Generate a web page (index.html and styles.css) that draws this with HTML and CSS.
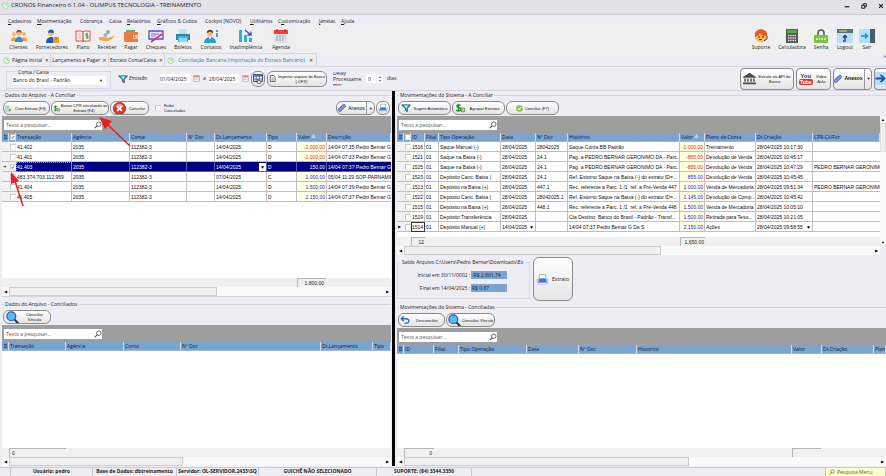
FILE: index.html
```html
<!DOCTYPE html>
<html lang="pt-BR">
<head>
<meta charset="utf-8">
<title>CRONOS Financeiro 6.1.04</title>
<link rel="stylesheet" href="styles.css">
</head>
<body>
<svg class="sprite" aria-hidden="true">
  <symbol id="logo" viewBox="0 0 12 12"><circle cx="6" cy="6" r="5" fill="#eef9ee" stroke="#7fd08a" stroke-width="1.2"/><path d="M4 8l4-4M5 4h3v3" fill="none" stroke="#7fd08a"/></symbol>
  <symbol id="people" viewBox="0 0 16 14"><circle cx="3" cy="5" r="2" fill="#f6b26b"/><circle cx="13" cy="5" r="2" fill="#f6b26b"/><path d="M0 12c0-5 6-5 6 0zM10 12c0-5 6-5 6 0z" fill="#f39c2d"/><circle cx="8" cy="4" r="2.6" fill="#f6b26b"/><path d="M5.300 4c0-4 5.400-4 5.400 0L8 2.500z" fill="#7a3d1c"/><path d="M4 13c0-7 8-7 8 0z" fill="#2b8fd0"/></symbol>
  <symbol id="worker" viewBox="0 0 16 14"><circle cx="7" cy="4.500" r="2.700" fill="#f6b26b"/><path d="M4 3.800C4-.6 10-.6 10 3.800z" fill="#1d5fa8"/><path d="M2 14c0-8 10-8 10 0z" fill="#1f5a9c"/><path d="M9 8h6v6H9z" fill="#f0a030"/><path d="M11.500 8h1v3h-1z" fill="#a65e10"/></symbol>
  <symbol id="book" viewBox="0 0 16 14"><path d="M1 2h6l1 1 1-1h6v10H1z" fill="#f4efe8" stroke="#d4574e"/><path d="M8 3v10" stroke="#c0392b"/><path d="M3 5h3M3 7h3M3 9h3" stroke="#bbb"/><path d="M13 4.800h-2v2h2v2h-2M12 4v6" fill="none" stroke="#349a4a" stroke-width=".9"/></symbol>
  <symbol id="receive" viewBox="0 0 16 14"><circle cx="9" cy="3" r="2" fill="#8ba7b8"/><circle cx="6.500" cy="6" r="2" fill="#9ab3c2"/><path d="M0 8h5l4 1 6-2c1 1-3 4-6 5H5l-5-1z" fill="#f5a93b"/></symbol>
  <symbol id="wallet" viewBox="0 0 16 14"><path d="M3 1h9v5H3z" fill="#4cbb6c"/><path d="M1 3h14v10H2L1 12z" fill="#ee7b45"/><path d="M10 6h5v4h-5z" fill="#ffc98a"/><circle cx="11.500" cy="8" r=".8" fill="#b04a1d"/></symbol>
  <symbol id="cheque" viewBox="0 0 16 14"><path d="M1 2h14v8H1z" fill="#e9e7fb" stroke="#5656b5" stroke-width="1.300"/><path d="M3 5h8M3 7h5" stroke="#7777c9"/><path d="M3 13L14 5" stroke="#cf3475" stroke-width="1.700"/></symbol>
  <symbol id="printer" viewBox="0 0 16 14"><path d="M4 0h8v5H4z" fill="#b9e6f6"/><path d="M1 5h14v6H1z" fill="#3b7f99"/><path d="M3 7h10v6H3z" fill="#3bb9e6"/><path d="M4 9h8v4H4z" fill="#83def8"/></symbol>
  <symbol id="contact" viewBox="0 0 16 14"><circle cx="7" cy="4.500" r="3" fill="#f8b878"/><path d="M4 4C3-.5 11-.5 10 4L7 2.500z" fill="#5d3824"/><path d="M1 14C1 6 13 6 13 14z" fill="#2b9bd8"/><path d="M6 8h2l-1 3z" fill="#fff"/><path d="M14 1v2M14 4v4" stroke="#2b7fc8" stroke-width="1.500"/></symbol>
  <symbol id="bars" viewBox="0 0 16 14"><path d="M1 1h3v12H1zM6 6h3v7H6zM11 9h3v4h-3z" fill="#22b6d4"/><path d="M7 1l6 5M13 2.500V6H9.500" fill="none" stroke="#3d47b0" stroke-width="1.300"/></symbol>
  <symbol id="calendar" viewBox="0 0 16 14"><path d="M1 3h14v11H1z" fill="#e3e6ea"/><path d="M1 1h14v4H1z" fill="#ef3e36"/><path d="M3 7h10M3 9h10M3 11h8" stroke="#8d98a3" stroke-dasharray="2 1"/><path d="M4 0v3M12 0v3" stroke="#9c2b25"/></symbol>
  <symbol id="support" viewBox="0 0 16 14"><circle cx="8" cy="7.500" r="6" fill="#ffb64c"/><path d="M2 8C0-2 16-2 14 7c-4 0-6-1-7-3-1 2-3 3-5 4z" fill="#f2541f"/><circle cx="6" cy="8" r=".7"/><circle cx="10" cy="8" r=".7"/><path d="M6 10.500h3M14 7v3l-3 2" fill="none" stroke="#444"/></symbol>
  <symbol id="calc" viewBox="0 0 16 14"><path d="M2 0h12v14H2z" fill="#555"/><path d="M3 1h10v3H3z" fill="#5fa84a"/><path d="M4 6.500h8M4 9h8M4 11.500h8" stroke="#ddd" stroke-width="1.400" stroke-dasharray="1.500 .7"/></symbol>
  <symbol id="lock" viewBox="0 0 16 14"><path d="M5 7V4c0-4 6-4 6 0v3" fill="none" stroke="#555" stroke-width="1.500"/><rect x="1" y="6" width="14" height="8" rx="1" fill="#7fc241"/><path d="M3 10h10" stroke="#fff" stroke-width="1.500" stroke-dasharray="1.500 1.200"/></symbol>
  <symbol id="logout" viewBox="0 0 16 14"><path d="M0 0h16v14H0z" fill="#b9defc"/><path d="M0 0h16v4H0z" fill="#52707c"/><path d="M2 2h8" stroke="#d7e67c"/><path d="M6 12h2V7M6 8.500l2-2 2 2" fill="none" stroke="#2b35b5" stroke-width="1.500"/></symbol>
  <symbol id="exit" viewBox="0 0 16 14"><path d="M0 0h11v14H0z" fill="#b3e2fc"/><path d="M11 0h5v14h-5z" fill="#455f6c"/><path d="M2 7h6M6 4.500L8.500 7 6 9.500" fill="none" stroke="#168ce0" stroke-width="1.500"/></symbol>
  <symbol id="funnel" viewBox="0 0 16 14"><path d="M1 2h14L10 8v5l-3-2V8z" fill="#23c5dd" stroke="#343b3e" stroke-width="1.300"/><path d="M5 3h6L8.500 7z" fill="#c7f7fb"/></symbol>
  <symbol id="cal2" viewBox="0 0 10 10"><path d="M1 1h8v8H1z" fill="#fff" stroke="#91a9c5"/><path d="M1 1h8v2.500H1z" fill="#ef8265"/><path d="M2 6h6" stroke="#91a9c5"/></symbol>
  <symbol id="gridhand" viewBox="0 0 16 16"><path d="M1 1h14v11H1z" fill="#fff" stroke="#26306a" stroke-width="1.500"/><path d="M1 2h14v2H1z" fill="#3946a5"/><path d="M5 3v9M10 3v9M1 8h14" stroke="#26306a"/><path d="M7 15V8l2 3h4l-1 4z" fill="#fff" stroke="#222"/></symbol>
  <symbol id="filedoc" viewBox="0 0 14 16"><path d="M2 1h7l4 4v10H2z" fill="#fff" stroke="#333" stroke-width="1.600"/><path d="M5 7h5M5 9.500h5M5 12h5" stroke="#333"/></symbol>
  <symbol id="bank" viewBox="0 0 16 14"><path d="M0 5l8-5 8 5v1H0z" fill="#4d4d4d"/><path d="M2.500 7v4M6 7v4M10 7v4M13.500 7v4" stroke="#4d4d4d" stroke-width="1.800"/><path d="M0 12h16v2H0z" fill="#4d4d4d"/></symbol>
  <symbol id="clip" viewBox="0 0 16 14"><path d="M2 9l7-7c3-2 6 0 4 3l-7 7c-3 2-5-1-3-3l6-6" fill="#8995dc" stroke="#5b68c4" stroke-width="1.600"/></symbol>
  <symbol id="create" viewBox="0 0 16 14"><path d="M1 1h8v12H1z" fill="#dce9f8" stroke="#7292bd"/><path d="M3 4h4M3 6.500h4M3 9h3" stroke="#7292bd"/><path d="M8 8l3-4 4 4-4 5z" fill="#f2ce4b"/><circle cx="11" cy="11" r="2.500" fill="#4dad51"/></symbol>
  <symbol id="money" viewBox="0 0 16 14"><path d="M9 3C5 0 1 3 4 5.500l4 1.500c4 2-1 7-6 3.500M5.500 0v13" fill="none" stroke="#16962c" stroke-width="2.200"/><path d="M10 7h5v6h-5z" fill="#efe3b5" stroke="#167026"/><path d="M12.500 8v4" stroke="#b82"/></symbol>
  <symbol id="cancel" viewBox="0 0 16 16"><circle cx="8" cy="8" r="7.500" fill="#d8382f" stroke="#942820"/><path d="M3 6c2-5 8-5 10 0z" fill="#ee938c"/><path d="M5 5l6 6M11 5l-6 6" stroke="#fff" stroke-width="2.200"/></symbol>
  <symbol id="print2" viewBox="0 0 16 14"><path d="M4 1h8v5H4z" fill="#fff" stroke="#8fa4c9"/><path d="M1 6h14v6H1z" fill="#b5c0d2"/><path d="M4 6h8l1 5H3z" fill="#3477e0"/><path d="M3 11h10v2H3z" fill="#fff" stroke="#8fa4c9" stroke-width=".6"/></symbol>
  <symbol id="check" viewBox="0 0 16 16"><circle cx="8" cy="8" r="7" fill="#8dc63f" stroke="#5e9220"/><path d="M4 8l3 3 5-6" fill="none" stroke="#fff" stroke-width="2.400"/></symbol>
  <symbol id="undo" viewBox="0 0 16 14"><path d="M2 5h8c6 0 5 7 0 7H7M6 1L2 5l4 4" fill="none" stroke="#2c6bb5" stroke-width="2.200"/></symbol>
  <symbol id="lens" viewBox="0 0 16 16"><path d="M10 10l5 5" stroke="#23364a" stroke-width="2.600"/><circle cx="6.500" cy="6.500" r="5.500" fill="#5fb6f5" stroke="#2c5f9c" stroke-width="1.500"/></symbol>
  <symbol id="find" viewBox="0 0 10 10"><circle cx="6" cy="4" r="2.800" fill="#fff" stroke="#555" stroke-width="1.100"/><path d="M4 6L1 9" stroke="#555" stroke-width="1.500"/></symbol>
  <symbol id="go" viewBox="0 0 16 16"><path d="M0 0h16v16H0z" fill="#b3dffc"/><path d="M2 8h11M8 3.500L13 8l-5 4.500" fill="none" stroke="#1c4db8" stroke-width="2.200"/></symbol>
  <symbol id="rows" viewBox="0 0 6 6"><path d="M1 1h4M1 3h4M1 5h4" stroke="#123c6c"/></symbol>
  <symbol id="sort" viewBox="0 0 6 6"><path d="M3 1l2 4H1z" fill="#a9c5e4" stroke="#d8e6f5" stroke-width=".7"/></symbol>
</svg>

<header class="titlebar"><svg class="ic-s"><use href="#logo"/></svg><h1>CRONOS Financeiro 6.1.04 - OLIMPUS TECNOLOGIA - TREINAMENTO</h1>
  <div class="winbtns"><button aria-label="Minimizar"><svg viewBox="0 0 8 8"><path d="M1 5h6" stroke="#111" stroke-width="1.600"/></svg></button><button aria-label="Restaurar"><svg viewBox="0 0 8 8"><path d="M3 3V1h4v4H5M1 3h4v4H1z" fill="none" stroke="#111" stroke-width="1.200"/></svg></button><button aria-label="Fechar"><svg viewBox="0 0 8 8"><path d="M1.500 1.500l5 5M6.500 1.500l-5 5" stroke="#111" stroke-width="1.400"/></svg></button></div>
</header>
<nav class="menubar"><a href="#"><u>C</u>adastros</a><a href="#"><u>M</u>ovimentação</a><a href="#">Cobrança</a><a href="#">Caixa</a><a href="#"><u>R</u>elatórios</a><a href="#"><u>G</u>ráficos &amp; Cubos</a><a href="#">Cockpit (NOVO)</a><a href="#"><u>U</u>tilitários</a><a href="#">C<u>u</u>stomização</a><a href="#"><u>J</u>anelas</a><a href="#"><u>A</u>juda</a></nav>
<div class="toolbar">
  <div class="tools tools-main">
    <button><svg><use href="#people"/></svg>Clientes</button><button><svg><use href="#worker"/></svg>Fornecedores</button><button><svg><use href="#book"/></svg>Plano</button><button><svg><use href="#receive"/></svg>Receber</button><button><svg><use href="#wallet"/></svg>Pagar</button><button><svg><use href="#cheque"/></svg>Cheques</button><button><svg><use href="#printer"/></svg>Boletos</button><button><svg><use href="#contact"/></svg>Contatos</button><button><svg><use href="#bars"/></svg>Inadimplência</button><button><svg><use href="#calendar"/></svg>Agenda</button>
  </div>
  <div class="tools tools-side">
    <button><svg><use href="#support"/></svg>Suporte</button><button><svg><use href="#calc"/></svg>Calculadora</button><button><svg><use href="#lock"/></svg>Senha</button><button><svg><use href="#logout"/></svg>Logout</button><button><svg><use href="#exit"/></svg>Sair</button>
  </div>
</div>
<div class="tabs">
  <a class="tab" href="#"><svg class="ic-s"><use href="#logo"/></svg>Página Inicial<span class="x">✕</span></a><a class="tab" href="#">Lançamento a Pagar<span class="x">✕</span></a><a class="tab" href="#">Extrato Conta/Caixa<span class="x">✕</span></a><a class="tab active" href="#"><svg class="ic-s"><use href="#logo"/></svg>Conciliação Bancária (Importação do Extrato Bancário)<span class="x">✕</span></a>
  <span class="more">»</span>
</div>

<section class="filters">
  <fieldset class="account"><legend><label for="conta">Conta / Caixa</label></legend><div class="combo"><select id="conta"><option>Banco do Brasil - Padrão</option></select><i>▼</i></div></fieldset>
  <div class="emission"><svg class="ic-m"><use href="#funnel"/></svg><label for="d1">Emissão</label></div>
  <div class="dates"><input id="d1" type="text" value="01/04/2025"><svg class="ic-s"><use href="#cal2"/></svg><label for="d2">a</label><input id="d2" type="text" value="28/04/2025"><svg class="ic-s"><use href="#cal2"/></svg></div>
  <button class="btn square" aria-label="Grade"><svg class="ic-m"><use href="#gridhand"/></svg></button>
  <button class="btn import"><svg class="ic-s"><use href="#filedoc"/></svg><span>Importar arquivo do Banco<br>(.OFX)</span></button>
  <label class="delay" for="delay"><span>Delay Processame nto:</span></label>
  <div class="days"><input id="delay" type="text" value="0"><span class="spin"><i>▲</i><i>▼</i></span><span>dias</span></div>
  <div class="actions">
    <button class="btn api"><svg class="ic-l"><use href="#bank"/></svg><span>Extrato via API do<br>Banco</span></button>
    <button class="btn video"><span class="yt"><b>You</b><b class="tube">Tube</b></span><span>Vídeo<br>Aula</span></button>
    <button class="btn annex big"><svg class="ic-m"><use href="#clip"/></svg><span>Anexos</span><i class="drop">▼</i></button>
    <button class="btn next" aria-label="Avançar"><svg class="ic-l"><use href="#go"/></svg></button>
  </div>
</section>

<main class="work">
  <div class="side left">
    <section class="panel top">
      <h2><span>Dados do Arquivo - A Conciliar</span></h2>
      <div class="btnrow">
        <button class="btn w47"><svg class="ic-s"><use href="#create"/></svg><span>Criar Extrato (F3)</span></button>
        <button class="btn w58"><svg class="ic-s"><use href="#money"/></svg><span>Baixar CPR vinculando ao<br>Extrato (F4)</span></button>
        <button class="btn w39"><svg class="ic-l"><use href="#cancel"/></svg><span>Cancelar</span></button>
        <label class="show"><input type="checkbox"><span>Exibir<br>Cancelados</span></label>
        <button class="btn annex push"><svg class="ic-m"><use href="#clip"/></svg><span>Anexos</span><i class="drop">▼</i></button>
        <button class="btn square" aria-label="Imprimir"><svg class="ic-m"><use href="#print2"/></svg></button>
      </div>
      <div class="searchbar"><label class="search"><input type="text" placeholder="Texto a pesquisar..." aria-label="Texto a pesquisar"><svg><use href="#find"/></svg></label></div>
      <div class="gridbox">
        <table class="grid">
          <colgroup><col class="c7"><col class="c7"><col class="c56"><col class="c58"><col class="c57"><col class="c28"><col class="c52"><col class="c30"><col class="c30"><col></colgroup>
          <thead><tr><th><svg><use href="#rows"/></svg></th><th><input type="checkbox" checked aria-label="Todos"></th><th>Transação</th><th>Agência</th><th>Conta</th><th>Nº Doc</th><th>Dt.Lançamento</th><th>Tipo</th><th>Valor <svg class="sort"><use href="#sort"/></svg></th><th>Descrição</th></tr></thead>
          <tbody>
            <tr><td></td><td><input type="checkbox" aria-label="41.402"></td><td>41.402</td><td>2035</td><td>112382-3</td><td></td><td>14/04/2025</td><td>D</td><td class="val neg">-2.000,00</td><td>14/04 07:35 Pedro Bernar G</td></tr>
            <tr><td></td><td><input type="checkbox" aria-label="41.401"></td><td>41.401</td><td>2035</td><td>112382-3</td><td></td><td>14/04/2025</td><td>D</td><td class="val neg">-1.000,00</td><td>14/04 07:33 Pedro Bernar G</td></tr>
            <tr class="sel"><td>➔</td><td><input type="checkbox" checked aria-label="41.403"></td><td class="cur">41.403</td><td>2035</td><td>112382-3</td><td></td><td><div class="pick">14/04/2025<i>▼</i></div></td><td>D</td><td class="val">150,00</td><td>14/04 07:37 Pedro Bernar G</td></tr>
            <tr><td></td><td><input type="checkbox" aria-label="483.374"></td><td>483.374.703.112.959</td><td>2035</td><td>112382-3</td><td></td><td>07/04/2025</td><td>C</td><td class="val">1.000,00</td><td>05/04 11:29 SOP-PARNAMIR</td></tr>
            <tr><td></td><td><input type="checkbox" aria-label="41.404"></td><td>41.404</td><td>2035</td><td>112382-3</td><td></td><td>14/04/2025</td><td>D</td><td class="val">1.500,00</td><td>14/04 07:39 Pedro Bernar G</td></tr>
            <tr><td></td><td><input type="checkbox" aria-label="41.405"></td><td>41.405</td><td>2035</td><td>112382-3</td><td></td><td>14/04/2025</td><td>D</td><td class="val">2.150,00</td><td>14/04 07:37 Pedro Bernar G</td></tr>
          </tbody>
        </table>
      </div>
      <div class="sums sums-a"><span>1.800,00</span></div>
      <div class="hscroll thumb-a"><i>◀</i><b></b><i>▶</i></div>
    </section>
    <section class="panel rest">
      <h2><span>Dados do Arquivo - Conciliados</span></h2>
      <div class="btnrow"><button class="btn w48"><svg class="ic-l"><use href="#lens"/></svg><span>Consultar<br>Vínculo</span></button></div>
      <div class="searchbar"><label class="search"><input type="text" placeholder="Texto a pesquisar..." aria-label="Texto a pesquisar"><svg><use href="#find"/></svg></label></div>
      <div class="gridbox">
        <table class="grid"><colgroup><col class="c7"><col class="c57"><col class="c58"><col class="c57"><col><col class="c52"><col class="c18"></colgroup>
        <thead><tr><th><svg><use href="#rows"/></svg></th><th>Transação</th><th>Agência</th><th>Conta</th><th>Nº Doc</th><th>Dt.Lançamento</th><th>Tipo</th></tr></thead></table>
      </div>
      <div class="sums sums-b"><span>0</span></div>
      <div class="hscroll thumb-b"><i>◀</i><b></b><i>▶</i></div>
    </section>
  </div>
  <div class="split"></div>
  <div class="side right">
    <section class="panel">
      <h2><span>Movimentações do Sistema - A Conciliar</span></h2>
      <div class="btnrow">
        <button class="btn w53"><svg class="ic-m"><use href="#funnel"/></svg><span>Sugerir Automático</span></button>
        <button class="btn w53"><svg class="ic-m"><use href="#money"/></svg><span>Agrupar Extratos</span></button>
        <button class="btn w53 centered"><svg class="ic-s"><use href="#check"/></svg><span>Conciliar (F7)</span></button>
      </div>
      <div class="scrolled">
        <div class="pane">
          <div class="searchbar"><label class="search"><input type="text" placeholder="Texto a pesquisar..." aria-label="Texto a pesquisar"><svg><use href="#find"/></svg></label></div>
          <div class="gridbox">
          <table class="grid">
            <colgroup><col class="c7"><col class="c7"><col class="c14"><col class="c14"><col class="c62"><col class="c35"><col class="c32"><col class="c112"><col class="c25"><col class="c51"><col class="c57"><col></colgroup>
            <thead><tr><th><svg><use href="#rows"/></svg></th><th><input type="checkbox" aria-label="Todos"></th><th>ID</th><th>Filial</th><th>Tipo Operação</th><th>Data</th><th>Nº Doc</th><th>Histórico</th><th>Valor <svg class="sort"><use href="#sort"/></svg></th><th>Plano de Conta</th><th>Dt.Criação</th><th>CPR-Cli/For</th></tr></thead>
            <tbody>
              <tr><td></td><td><input type="checkbox" aria-label="1516"></td><td>1516</td><td>01</td><td>Saque Manual (-)</td><td>28/04/2025</td><td>28042025</td><td>Saque Conta BB Padrão</td><td class="val neg">-1.000,00</td><td>Treinamento</td><td>28/04/2025 10:17:30</td><td></td></tr>
              <tr><td></td><td><input type="checkbox" aria-label="1521"></td><td>1521</td><td>01</td><td>Saque na Baixa (-)</td><td>28/04/2025</td><td>24.1</td><td>Pag. a PEDRO BERNAR GERONIMO DA - Parc...</td><td class="val neg">-855,00</td><td>Devolução de Venda</td><td>28/04/2025 10:45:17</td><td></td></tr>
              <tr><td></td><td><input type="checkbox" aria-label="1525"></td><td>1525</td><td>01</td><td>Saque na Baixa (-)</td><td>28/04/2025</td><td>24.1</td><td>Pag. a PEDRO BERNAR GERONIMO DA - Parc...</td><td class="val neg">-855,00</td><td>Devolução de Venda</td><td>28/04/2025 10:47:29</td><td>PEDRO BERNAR GERONIMO D</td></tr>
              <tr><td></td><td><input type="checkbox" aria-label="1523"></td><td>1523</td><td>01</td><td>Depósito Canc. Baixa (</td><td>28/04/2025</td><td>24.1</td><td>Ref. Estorno Saque na Baixa (-) do extrato ID=...</td><td class="val">855,00</td><td>Devolução de Venda</td><td>28/04/2025 10:45:45</td><td></td></tr>
              <tr><td></td><td><input type="checkbox" aria-label="1513"></td><td>1513</td><td>01</td><td>Depósito na Baixa (+)</td><td>28/04/2025</td><td>447.1</td><td>Rec. referente a Parc. 1 /1 &nbsp;ref. a Pré-Venda 447</td><td class="val">1.000,00</td><td>Venda de Mercadoria</td><td>28/04/2025 09:51:34</td><td>PEDRO BERNAR GERONIMO D</td></tr>
              <tr><td></td><td><input type="checkbox" aria-label="1522"></td><td>1522</td><td>01</td><td>Depósito Canc. Baixa (</td><td>28/04/2025</td><td>28042025.1</td><td>Ref. Estorno Saque na Baixa (-) do extrato ID=...</td><td class="val">1.145,00</td><td>Devolução de Comp...</td><td>28/04/2025 10:45:42</td><td></td></tr>
              <tr><td></td><td><input type="checkbox" aria-label="1515"></td><td>1515</td><td>01</td><td>Depósito na Baixa (+)</td><td>28/04/2025</td><td>448.1</td><td>Rec. referente a Parc. 1 /1 &nbsp;ref. a Pré-Venda 448</td><td class="val">1.500,00</td><td>Venda de Mercadoria</td><td>28/04/2025 10:05:10</td><td></td></tr>
              <tr><td></td><td><input type="checkbox" aria-label="1519"></td><td>1519</td><td>01</td><td>Depósito Transferência</td><td>28/04/2025</td><td></td><td>Cta Destino: Banco do Brasil - Padrão - Transf...</td><td class="val">1.500,00</td><td>Retirada para Teso...</td><td>28/04/2025 10:21:05</td><td></td></tr>
              <tr><td>▶</td><td><input type="checkbox" aria-label="1514"></td><td class="box">1514</td><td>01</td><td>Depósito Manual (+)</td><td><div class="pick">14/04/2025<i>▼</i></div></td><td></td><td>14/04 07:37 Pedro Bernar G Da S</td><td class="val">2.150,00</td><td>Ações</td><td><div class="pick">28/04/2025 09:58:55<i>▼</i></div></td><td></td></tr>
            </tbody>
          </table>
          </div>
          <div class="sums sums-c"><span>12</span><span>1.650,00</span></div>
        </div>
        <div class="vscroll"><i>▲</i><b></b><i>▼</i></div>
      </div>
      <div class="hscroll thumb-c"><i>◀</i><b></b><i>▶</i></div>
    </section>
    <section class="balance">
      <fieldset><legend>Saldo Arquivo C:\Users\Pedro Bernar\Downloads\Ex</legend>
        <dl><dt>Inicial em 30/11/0002 :</dt><dd>-R$ 2.801,74</dd><dt>Final em 14/04/2025 :</dt><dd>R$ 0,87</dd></dl>
      </fieldset>
      <button class="btn extract"><svg class="ic-l"><use href="#print2"/></svg><span>Extrato</span></button>
    </section>
    <section class="panel rest">
      <h2><span>Movimentações do Sistema - Conciliadas</span></h2>
      <div class="btnrow"><button class="btn w47"><svg class="ic-m"><use href="#undo"/></svg><span>Desconciliar</span></button><button class="btn w49"><svg class="ic-l"><use href="#lens"/></svg><span>Consultar Vínculo</span></button></div>
      <div class="searchbar"><label class="search"><input type="text" placeholder="Texto a pesquisar..." aria-label="Texto a pesquisar"><svg><use href="#find"/></svg></label></div>
      <div class="gridbox">
        <table class="grid"><colgroup><col class="c7"><col class="c30"><col class="c25"><col class="c68"><col class="c52"><col class="c58"><col><col class="c30"><col class="c52"><col class="c12"></colgroup>
        <thead><tr><th><svg><use href="#rows"/></svg></th><th>ID</th><th>Filial</th><th>Tipo Operação</th><th>Data</th><th>Nº Doc</th><th>Historico</th><th>Valor</th><th>Dt.Criação</th><th>Plan</th></tr></thead></table>
      </div>
      <div class="sums sums-d"><span>0</span><span></span></div>
      <div class="hscroll thumb-d"><i>◀</i><b></b><i>▶</i></div>
    </section>
  </div>
  <svg class="arrows" viewBox="0 0 140 120" aria-hidden="true"><path d="M130 55L107 33" stroke="#ee1c1c" stroke-width="1.500"/><path d="M99 26l13 4-7 8z" fill="#ee1c1c"/><path d="M23 115L15 90" stroke="#ee1c1c" stroke-width="1.500"/><path d="M11 81l8 9-8 3z" fill="#ee1c1c"/></svg>
</main>
<footer class="status"><span></span><span>Usuário: pedro</span><span>Base de Dados: dbtreinamento</span><span>Servidor: OL-SERVIDOR,2433\SQ</span><span>GUICHÊ NÃO SELECIONADO</span><span>SUPORTE: (84) 3344.3350</span><span></span><label class="menusearch"><svg><use href="#find"/></svg><input type="text" placeholder="Pesquisa Menu" aria-label="Pesquisa Menu"></label></footer>
</body>
</html>
```
FILE: styles.css
```css
:root {
  --ui: "Open Sans", "Noto Sans", sans-serif;
  --data: "Liberation Sans", Arial, sans-serif;
  --line: #d5d4df;
  --blue: #7ba4d1;
}
* { box-sizing: border-box; margin: 0; padding: 0; }
body {
  display: flex; flex-direction: column; min-height: 100vh;
  background: #eeedf3; color: #1c1c1c;
  font: 5px/7px var(--ui); overflow-x: hidden;
}
button, input, select { font: inherit; color: inherit; border: 0; background: none; min-width: 0; border-radius: 0; }
a { color: inherit; text-decoration: none; }
i { font-style: normal; }
svg { display: block; flex: none; }
.sprite { position: absolute; width: 0; height: 0; }
.ic-s { width: 7px; height: 7px; }
.ic-m { width: 10px; height: 10px; }
.ic-l { width: 13px; height: 13px; }

.titlebar { display: flex; align-items: center; height: 15px; padding: 0 2px 3px; gap: 2px; background: #e2e1e8; border-bottom: 1px solid #cccbd9; }
.titlebar h1 { font-size: 6px; font-weight: 400; }
.winbtns { display: flex; gap: 11px; margin-left: auto; }
.winbtns button, .winbtns svg { width: 6px; height: 6px; }

.menubar { display: grid; grid-template-columns: 29px 43px 29px 18px 30px 48px 45px 28px 41px 22px 20px; align-items: center; height: 12px; padding-left: 8px; white-space: nowrap; }
.toolbar { display: flex; justify-content: space-between; height: 26px; padding: 2px 8px 0 7px; background: #efefef; }
.tools { display: grid; }
.tools-main { grid-template-columns: 23px 44px 18px 30px 18px 32px 22px 34px 36px 34px; }
.tools-side { grid-template-columns: 30px 32px 26px 22px 22px; }
.tools button { display: flex; flex-direction: column; align-items: center; gap: 1px; white-space: nowrap; }
.tools svg { width: 16px; height: 14px; }

.tabs { display: flex; height: 14px; border-bottom: 1px solid var(--line); }
.tab { display: flex; align-items: center; gap: 2px; padding: 0 1px; border: 1px solid var(--line); border-width: 1px 1px 0 0; white-space: nowrap; }
.tab:first-child { padding-left: 3px; }
.tab .x { width: 5px; text-align: center; color: #333; font: 5px/7px "DejaVu Sans", sans-serif; }
.tab.active { color: #2480c8; padding: 0 2px; gap: 4px; }
.more { margin-left: auto; }

.filters { display: flex; align-items: center; height: 24px; padding-left: 6px; border-bottom: 1px solid var(--line); }
fieldset { border: 1px solid #d9d8e2; min-width: 0; }
.account { width: 105px; height: 20px; padding: 1px 4px 0 5px; }
.account legend { margin-left: 5px; padding: 0 1px; line-height: 6px; }
.combo { display: flex; align-items: center; height: 9px; background: #fff; }
.combo select { flex: 1; height: 100%; appearance: none; padding-left: 1px; }
.combo i { width: 7px; font-size: 4px; }
.emission { display: flex; align-items: center; gap: 1px; width: 49px; padding-left: 7px; font-style: italic; }
.dates { display: flex; align-items: center; gap: 3px; width: 91px; }
.dates input { width: 30px; height: 9px; background: #fff; }
.btn { display: flex; align-items: center; justify-content: center; gap: 2px; height: 14px; padding: 0 2px; overflow: hidden; border: 1px solid #8b8b8b; border-radius: 6px; background: linear-gradient(#fff, #e4e4e4); font: 4px/5px var(--data); color: #111; white-space: nowrap; }
.btn > span { flex: 1; text-align: center; }
.btn.centered > span { flex: none; }
.square { width: 14px; }
.filters .square, .import { height: 16px; }
.import { width: 60px; margin-left: 2px; }
.delay { display: flex; align-items: center; width: 29px; height: 14px; margin-left: 6px; overflow: hidden; line-height: 6px; }
.days { display: flex; align-items: center; gap: 1px; margin-left: 4px; }
.days input { width: 10px; height: 9px; padding-left: 2px; background: #fff; }
.spin { display: flex; flex-direction: column; width: 6px; margin-right: 3px; font-size: 3px; line-height: 4px; text-align: center; background: #fff; }
.actions { display: flex; gap: 2px; margin-left: auto; }
.actions .btn { height: 22px; border-radius: 4px; }
.actions .api { width: 54px; }
.actions .video { width: 35px; }
.yt { display: flex; flex-direction: column; font-size: 6px; line-height: 6px; color: #345; }
.yt .tube { background: #e5352e; color: #fff; border-radius: 2px; font-size: 5px; }
.annex { width: 39px; font-size: 5px; }
.annex.big { font-weight: 700; }
.annex { padding-right: 1px; gap: 1px; }
.drop { align-self: stretch; display: flex; align-items: center; padding: 0 2px; border-left: 1px solid #999; font-size: 4px; }
.actions .annex { gap: 1px; }
.actions .next { width: 12px; padding: 0; border-right: 0; border-radius: 4px 0 0 4px; }

.work { position: relative; flex: 1; display: grid; grid-template-columns: 392fr 3px 491fr; }
.split { background: #050508; }
.side { display: flex; flex-direction: column; min-width: 0; }
.left { padding: 0 1px 0 2px; gap: 3px; }
.right { padding-left: 2px; }
.panel { display: flex; flex-direction: column; min-width: 0; }
.panel.top { height: 206px; border-bottom: 1px solid var(--line); }
.panel.rest { flex: 1; }
.panel h2 { display: flex; align-items: center; gap: 1px; height: 9px; font-size: 5px; font-weight: 400; white-space: nowrap; }
.panel h2::before { content: ""; width: 2px; border-top: 1px solid var(--line); }
.panel h2::after { content: ""; flex: 1; border-top: 1px solid var(--line); }
.btnrow { display: flex; align-items: center; gap: 1px; height: 16px; padding: 0 1px; }
.push { margin-left: auto; }
.w39 { width: 39px; } .w47 { width: 47px; } .w48 { width: 48px; } .w49 { width: 49px; } .w53 { width: 53px; } .w58 { width: 58px; }
.w47, .w49, .w58 { padding: 0 1px; gap: 1px; }
.show { display: flex; align-items: center; gap: 3px; padding-left: 5px; font: 4px/5px var(--data); }
input[type="checkbox"] { appearance: none; display: block; width: 6px; height: 6px; background: #fff; border: 1px solid #c8c8c8; border-right-color: #eee; border-bottom-color: #eee; }
input[type="checkbox"]:checked::after { content: "✓"; display: block; color: #000; font: bold 5px/4px "DejaVu Sans", sans-serif; }

.searchbar { height: 17px; padding: 4px 2px; background: #9e9e9e; }
.search { display: flex; align-items: center; width: 98px; height: 10px; background: #fff; }
.search input { flex: 1; height: 100%; padding-left: 2px; }
.search svg { width: 8px; height: 8px; }
::placeholder { color: #555; opacity: 1; }

.gridbox { flex: 1; min-height: 104px; background: #fff; }
.panel.top .gridbox { min-height: 0; }
.panel.rest .gridbox { min-height: 0; }
.grid { width: 100%; table-layout: fixed; border-collapse: separate; border-spacing: 0; }
.grid th, .grid td { height: 10px; overflow: hidden; white-space: nowrap; text-align: left; border: 0 solid #c0c0c0; border-width: 0 1px 1px 0; padding-left: 1px; line-height: 8px; }
.grid th { height: 9px; background: var(--blue); border-color: #cfdff0; border-bottom-color: #9cb8d8; font-weight: 400; color: #07203c; }
.grid td { font-family: var(--data); background: #fff; color: #111; }
.grid td:first-child, .grid td:nth-child(2) { background: #f1f1f1; font-size: 4px; border-right: 0; }
.grid td:last-child { border-right: 0; }
.grid th svg { width: 5px; height: 6px; }
.grid th .sort { display: inline-block; }
.grid .val { text-align: right; padding-right: 1px; background: #ffffe1; color: #1c1cf0; }
.grid .neg { color: #f01c1c; }
.grid .sel td:nth-child(n + 3) { background: #000080; color: #fff; border-color: #5c5ca8; }
.grid .cur { outline: 1px dotted #999; outline-offset: -1px; }
.grid .box { outline: 1px solid #333; outline-offset: -1px; }
.pick { display: flex; align-items: center; justify-content: space-between; }
.pick i { width: 7px; height: 8px; background: #fff; color: #000; font-size: 5px; text-align: center; }
.c7 { width: 7px; } .c12 { width: 12px; } .c14 { width: 14px; } .c18 { width: 18px; } .c25 { width: 25px; } .c28 { width: 28px; } .c30 { width: 30px; } .c32 { width: 32px; } .c35 { width: 35px; } .c51 { width: 51px; } .c52 { width: 52px; } .c56 { width: 56px; } .c57 { width: 57px; } .c58 { width: 58px; } .c62 { width: 62px; } .c68 { width: 68px; } .c112 { width: 112px; }

.sums { display: grid; height: 9px; background: #f0f0f0; font-family: var(--data); }
.sums span { border: 1px solid #b5b5b5; border-width: 1px 0 0 1px; text-align: right; padding: 0 2px; line-height: 8px; grid-row: 1; }
.sums-a { grid-template-columns: 295px 29px; }
.sums-a span { grid-column: 2; }
.sums-b { grid-template-columns: 7px 57px; }
.sums-b span { grid-column: 2; text-align: left; }
.sums-c { grid-template-columns: 14px 14px 255px 25px; }
.sums-c span { grid-column: 2; padding-right: 1px; }
.sums-c span + span { grid-column: 4; }
.sums-d { grid-template-columns: 7px 30px 1fr 29px 65px; }
.sums-d span { grid-column: 2; }
.sums-d span + span { grid-column: 4; }

.hscroll { display: flex; align-items: center; height: 9px; background: #fafafa; }
.hscroll i { width: 7px; text-align: center; color: #000; font-size: 4px; }
.hscroll b { align-self: stretch; background: #f0f0f0; border: 1px solid #ccc; }
.hscroll i:last-child { margin-left: auto; }
.thumb-a b { width: 208px; }
.thumb-b b { width: 174px; }
.thumb-c { margin-right: 6px; }
.thumb-c b { width: 257px; }
.thumb-d b { width: 285px; }
.scrolled { display: flex; }
.pane { flex: 1; min-width: 0; }
.vscroll { display: flex; flex-direction: column; width: 6px; background: #fafafa; font-size: 4px; text-align: center; color: #000; }
.vscroll b { height: 29px; background: #f0f0f0; border: 1px solid #ddd; }
.vscroll i:last-child { margin-top: auto; }

.balance { display: flex; gap: 3px; height: 48px; padding: 2px 0; }
.balance fieldset { width: 133px; height: 40px; margin-top: 2px; }
.balance legend { width: 125px; margin-left: 3px; padding: 0 1px; overflow: hidden; white-space: nowrap; }
.balance dl { display: grid; grid-template-columns: 72px 36px; gap: 5px 1px; padding-top: 5px; }
.balance dt { text-align: right; line-height: 8px; }
.balance dd { background: var(--blue); line-height: 8px; padding-left: 1px; }
.balance .extract { width: 40px; height: 44px; font: 5px/7px var(--ui); }

.status { display: grid; grid-template-columns: 11px 82px 84px 82px 118px 95px 1fr 60px; height: 9px; margin-top: 1px; border-top: 1px solid #ccc; font-weight: 700; white-space: nowrap; text-align: center; }
.status > * { border-right: 1px solid #c9c8d2; overflow: hidden; }
.menusearch { display: flex; align-items: center; gap: 2px; padding-left: 3px; background: #ffffc8; font-weight: 400; }
.menusearch svg { width: 6px; height: 6px; }
.menusearch input { flex: 1; }
.arrows { position: absolute; left: 0; top: 0; width: 140px; height: 120px; pointer-events: none; fill: none; }
```
